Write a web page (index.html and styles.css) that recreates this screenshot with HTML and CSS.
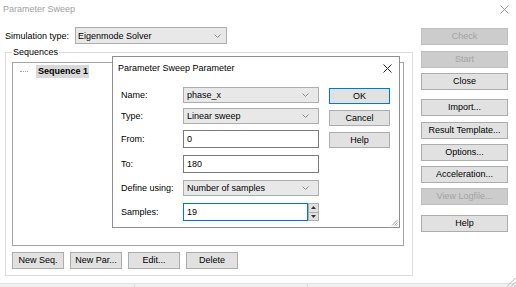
FILE: index.html
```html
<!DOCTYPE html>
<html>
<head>
<meta charset="utf-8">
<title>Parameter Sweep</title>
<link rel="stylesheet" href="styles.css">
</head>
<body>
<div class="window">
  <div class="titlebar">
    <span class="title">Parameter Sweep</span>
    <svg class="winclose" width="9" height="9" viewBox="0 0 9 9"><path d="M0.5 0.5 L8.5 8.5 M8.5 0.5 L0.5 8.5" stroke="#9a9a9a" stroke-width="1" fill="none"/></svg>
  </div>
  <div class="main">
    <div class="left">
      <div class="simrow">
        <span class="simlabel">Simulation type:</span>
        <div class="combo sim"><span>Eigenmode Solver</span><svg width="7" height="4" viewBox="0 0 7 4"><path d="M0.5 0.5 L3.5 3.5 L6.5 0.5" stroke="#8a8a8a" fill="none"/></svg></div>
      </div>
      <div class="group">
        <span class="legend">Sequences</span>
        <div class="tree">
          <div class="node"><span class="dots"></span><span class="sel">Sequence 1</span></div>
        </div>
        <div class="seqbtns">
          <button class="btn">New Seq.</button>
          <button class="btn">New Par...</button>
          <button class="btn">Edit...</button>
          <button class="btn">Delete</button>
        </div>
      </div>
    </div>
    <div class="right">
      <button class="btn side dis">Check</button>
      <button class="btn side dis m6">Start</button>
      <button class="btn side m5">Close</button>
      <button class="btn side m9">Import...</button>
      <button class="btn side m6">Result Template...</button>
      <button class="btn side m5">Options...</button>
      <button class="btn side m5">Acceleration...</button>
      <button class="btn side dis m5">View Logfile...</button>
      <button class="btn side m10">Help</button>
    </div>
  </div>
  <div class="statusbar">
    <div class="seg s1"></div>
    <div class="seg s2"></div>
    <div class="seg s3"></div>
  </div>
  <svg class="wingrip" width="12" height="12" viewBox="0 0 12 12"><path d="M11.5 3 L3 11.5 M11.5 7 L7 11.5 M11.5 10 L10 11.5" stroke="#b5b5b5" fill="none"/></svg>

  <div class="dialog">
    <div class="dtitle">
      <span>Parameter Sweep Parameter</span>
      <svg width="9" height="9" viewBox="0 0 9 9"><path d="M0.5 0.5 L8.5 8.5 M8.5 0.5 L0.5 8.5" stroke="#222" stroke-width="1" fill="none"/></svg>
    </div>
    <div class="dbody">
      <div class="form">
        <div class="row r-name"><span class="lbl">Name:</span>
          <div class="combo field"><span>phase_x</span><svg width="7" height="4" viewBox="0 0 7 4"><path d="M0.5 0.5 L3.5 3.5 L6.5 0.5" stroke="#8a8a8a" fill="none"/></svg></div>
        </div>
        <div class="row r-type"><span class="lbl">Type:</span>
          <div class="combo field"><span>Linear sweep</span><svg width="7" height="4" viewBox="0 0 7 4"><path d="M0.5 0.5 L3.5 3.5 L6.5 0.5" stroke="#8a8a8a" fill="none"/></svg></div>
        </div>
        <div class="row r-from tall"><span class="lbl">From:</span>
          <div class="input field">0</div>
        </div>
        <div class="row r-to tall"><span class="lbl">To:</span>
          <div class="input field">180</div>
        </div>
        <div class="row r-def"><span class="lbl">Define using:</span>
          <div class="combo field"><span>Number of samples</span><svg width="7" height="4" viewBox="0 0 7 4"><path d="M0.5 0.5 L3.5 3.5 L6.5 0.5" stroke="#8a8a8a" fill="none"/></svg></div>
        </div>
        <div class="row r-samp tall"><span class="lbl">Samples:</span>
          <div class="spinfield field">
            <div class="input focus">19</div>
            <div class="spin">
              <div class="sb"><svg width="5" height="3" viewBox="0 0 5 3"><path d="M0 3 L2.5 0 L5 3 Z" fill="#333"/></svg></div>
              <div class="sb"><svg width="5" height="3" viewBox="0 0 5 3"><path d="M0 0 L2.5 3 L5 0 Z" fill="#333"/></svg></div>
            </div>
          </div>
        </div>
      </div>
      <div class="dbtns">
        <button class="btn dbtn def">OK</button>
        <button class="btn dbtn">Cancel</button>
        <button class="btn dbtn">Help</button>
      </div>
    </div>
    <svg class="dgrip" width="7" height="7" viewBox="0 0 7 7"><path d="M6.5 1 L1 6.5 M6.5 3.5 L3.5 6.5 M6.5 5.5 L5.5 6.5" stroke="#a0a0a0" fill="none"/></svg>
  </div>
</div>
</body>
</html>
```
FILE: styles.css
```css
* { box-sizing: border-box; }
html, body { margin: 0; padding: 0; }
body {
  width: 516px;
  height: 287px;
  overflow: hidden;
  background: #ffffff;
  font-family: "Liberation Sans", Arial, sans-serif;
  font-size: 9px;
  color: #000;
}
.window {
  position: relative;
  width: 516px;
  height: 287px;
  display: flex;
  flex-direction: column;
  background: #ffffff;
}
.titlebar {
  height: 18px;
  flex: 0 0 18px;
  display: flex;
  align-items: center;
  justify-content: space-between;
  padding: 0 7px 0 3px;
  color: #a0a0a0;
}
.main {
  display: flex;
  flex: 1;
  padding-left: 5px;
}
.left {
  width: 408px;
  display: flex;
  flex-direction: column;
}
.simrow {
  display: flex;
  align-items: center;
  height: 17px;
  margin-top: 9px;
}
.simlabel { width: 70px; }
.combo {
  height: 17px;
  border: 1px solid #adadad;
  background: #e8e8e8;
  display: flex;
  align-items: center;
  justify-content: space-between;
  padding: 0 5px 0 2px;
  white-space: nowrap;
}
.combo.sim { width: 152px; }
.group {
  margin-top: 8px;
  height: 224px;
  border: 1px solid #dcdcdc;
  padding: 0 8px 6px 6px;
  display: flex;
  flex-direction: column;
}
.legend {
  align-self: flex-start;
  margin-top: -6px;
  height: 11px;
  line-height: 11px;
  padding: 0 1px;
  background: #fff;
}
.tree {
  margin-top: 4px;
  height: 184px;
  width: 392px;
  border: 1px solid #a5a5a5;
  padding-top: 2px;
}
.node {
  display: flex;
  align-items: center;
  height: 13px;
  padding-left: 7px;
}
.dots {
  width: 8px;
  height: 1px;
  border-top: 1px dotted #a0a0a0;
  margin-right: 8px;
}
.sel {
  background: #d9d9d9;
  font-weight: bold;
  padding: 0 1px 0 2px;
  line-height: 13px;
}
.seqbtns {
  display: flex;
  gap: 6px;
  margin-top: 6px;
}
.btn {
  height: 17px;
  width: 52px;
  padding: 0;
  margin: 0;
  border: 1px solid #adadad;
  background: #e1e1e1;
  font-family: inherit;
  font-size: 9px;
  color: #000;
  line-height: 15px;
  text-align: center;
  white-space: nowrap;
}
.right {
  margin-left: 8px;
  width: 87px;
  display: flex;
  flex-direction: column;
  padding-top: 10px;
}
.btn.side { width: 87px; }
.btn.dis {
  background: #cccccc;
  border-color: #bfbfbf;
  color: #a3a3a3;
}
.m5 { margin-top: 5px; }
.m6 { margin-top: 6px; }
.m9 { margin-top: 9px; }
.m10 { margin-top: 10px; }
.statusbar {
  height: 4px;
  flex: 0 0 4px;
  display: flex;
  background: #f0f0f0;
  border-top: 1px solid #e1e1e1;
}
.seg { height: 100%; border-right: 1px solid #dcdcdc; }
.s1 { width: 135px; }
.s2 { width: 173px; }
.s3 { flex: 1; border-right: none; }
.wingrip {
  position: absolute;
  right: 0;
  bottom: 0;
}
.dialog {
  position: absolute;
  left: 112px;
  top: 56px;
  width: 288px;
  height: 172px;
  border: 1px solid #8e8e8e;
  background: #fff;
}
.dtitle {
  height: 22px;
  display: flex;
  align-items: center;
  justify-content: space-between;
  padding: 0 7px 0 5px;
}
.dbody {
  display: flex;
  padding: 8px 0 0 8px;
}
.form {
  display: flex;
  flex-direction: column;
}
.row {
  display: flex;
  align-items: center;
  height: 16px;
}
.row.tall { height: 18px; }
.r-type { margin-top: 5px; }
.r-from { margin-top: 6px; }
.r-to { margin-top: 7px; }
.r-def { margin-top: 7px; }
.r-samp { margin-top: 7px; }
.lbl { width: 62px; }
.field { width: 136px; height: 100%; }
.combo.field { padding: 0 9px 0 3px; }
.input {
  height: 100%;
  border: 1px solid #7a7a7a;
  background: #fff;
  padding: 0 3px;
  display: flex;
  align-items: center;
}
.spinfield { display: flex; }
.input.focus {
  flex: 1;
  border-color: #0078d7;
}
.spin {
  width: 11px;
  display: flex;
  flex-direction: column;
  border: 1px solid #adadad;
  background: #e1e1e1;
}
.sb {
  flex: 1;
  display: flex;
  align-items: center;
  justify-content: center;
}
.sb + .sb { border-top: 1px solid #adadad; }
.dbtns {
  margin-left: 10px;
  padding-top: 1px;
  display: flex;
  flex-direction: column;
  gap: 6px;
}
.btn.dbtn { width: 61px; height: 16px; line-height: 14px; }
.btn.def { border-color: #0078d7; }
.dgrip {
  position: absolute;
  right: 1px;
  bottom: 1px;
}
```
